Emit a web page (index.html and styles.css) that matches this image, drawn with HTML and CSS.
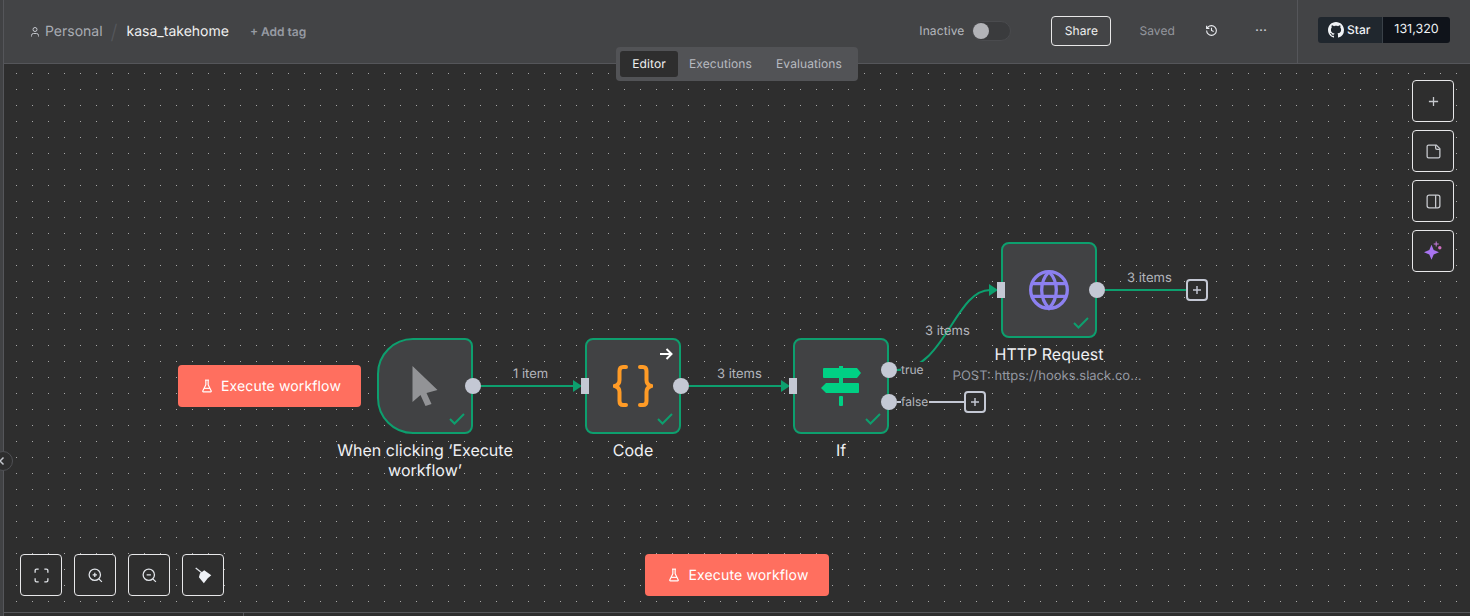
FILE: index.html
```html
<!DOCTYPE html>
<html>
<head>
    <title>kasa_takehome - n8n</title>
    <link rel="stylesheet" href="styles.css">
</head>
<body>
    <div class="sidebar"></div>
    <div class="main">
        <header class="topbar">
            <div class="crumbs">
                <svg class="crumb-icon" viewBox="0 0 24 24"><path d="M19 21v-2a4 4 0 0 0-4-4H9a4 4 0 0 0-4 4v2"/><circle cx="12" cy="7" r="4"/></svg>
                <span class="crumb-project">Personal</span>
                <span class="crumb-sep">/</span>
                <span class="crumb-name">kasa_takehome</span>
                <span class="add-tag">+ Add tag</span>
            </div>
            <div class="actions">
                <span class="status">Inactive</span>
                <span class="toggle"><span class="toggle-knob"></span></span>
                <button class="share">Share</button>
                <span class="saved">Saved</span>
                <svg class="history" viewBox="0 0 24 24"><path d="M3 12a9 9 0 1 0 9-9 9.75 9.75 0 0 0-6.74 2.74L3 8"/><path d="M3 3v5h5"/><path d="M12 7v5l4 2"/></svg>
                <span class="more">&#183;&#183;&#183;</span>
            </div>
            <div class="github">
                <div class="star-badge">
                    <span class="star-left">
                        <svg class="octocat" viewBox="0 0 16 16"><path d="M8 0C3.58 0 0 3.58 0 8c0 3.54 2.29 6.53 5.47 7.59.4.07.55-.17.55-.38 0-.19-.01-.82-.01-1.49-2.01.37-2.53-.49-2.69-.94-.09-.23-.48-.94-.82-1.13-.28-.15-.68-.52-.01-.53.63-.01 1.08.58 1.23.82.72 1.21 1.87.87 2.33.66.07-.52.28-.87.51-1.07-1.78-.2-3.64-.89-3.64-3.95 0-.87.31-1.59.82-2.15-.08-.2-.36-1.02.08-2.12 0 0 .67-.21 2.2.82.64-.18 1.32-.27 2-.27.68 0 1.36.09 2 .27 1.53-1.04 2.2-.82 2.2-.82.44 1.1.16 1.92.08 2.12.51.56.82 1.27.82 2.15 0 3.07-1.87 3.75-3.65 3.95.29.25.54.73.54 1.48 0 1.07-.01 1.93-.01 2.2 0 .21.15.46.55.38A8.013 8.013 0 0016 8c0-4.42-3.58-8-8-8z"/></svg>
                        Star
                    </span>
                    <span class="star-count">131,320</span>
                </div>
            </div>
        </header>

        <div class="tabs">
            <span class="tab tab-active">Editor</span>
            <span class="tab tab-executions">Executions</span>
            <span class="tab tab-evaluations">Evaluations</span>
        </div>

        <div class="canvas">
            <svg class="edges" width="1466" height="552" viewBox="4 64 1466 552">
                <path class="edge" d="M481 386H574"/>
                <path class="edge" d="M689 386H782"/>
                <path class="edge" d="M897 370C945 370 955 290 990 290"/>
                <path class="edge" d="M1105 290H1186"/>
                <path class="edge-empty" d="M897 402H964"/>
                <path class="arrow" d="M573 380l9 6-9 6z"/>
                <path class="arrow" d="M781 380l9 6-9 6z"/>
                <path class="arrow" d="M989 284l9 6-9 6z"/>
            </svg>

            <span class="edge-label label-a">1 item</span>
            <span class="edge-label label-b">3 items</span>
            <span class="edge-label label-c">3 items</span>
            <span class="edge-label label-d">3 items</span>
            <span class="edge-label label-true">true</span>
            <span class="edge-label label-false">false</span>

            <span class="plus plus-false"><svg viewBox="0 0 10 10"><path d="M5 0v10M0 5h10"/></svg></span>
            <span class="plus plus-http"><svg viewBox="0 0 10 10"><path d="M5 0v10M0 5h10"/></svg></span>

            <button class="run run-inline">
                <svg class="flask" viewBox="0 0 24 24"><path d="M10 2v7.527a2 2 0 0 1-.211.896L4.72 20.55a1 1 0 0 0 .9 1.45h12.76a1 1 0 0 0 .9-1.45l-5.069-10.127A2 2 0 0 1 14 9.527V2"/><path d="M8.5 2h7"/><path d="M7 16h10"/></svg>
                Execute workflow
            </button>

            <div class="node node-trigger">
                <svg class="node-icon" width="26" height="40" viewBox="1 1 25 40"><path class="cursor" d="M1 1L26 25L15 28L20 39L14 41L9 30L1 37Z"/></svg>
                <span class="handle-out"></span>
                <svg class="check" viewBox="0 0 16 12"><path d="M1 6l4.500 4.500L15 1"/></svg>
                <div class="node-label">When clicking ‘Execute workflow’</div>
            </div>

            <div class="node node-code">
                <svg class="node-icon braces" width="40" height="42" viewBox="0 0 40 42">
                    <path d="M13 2H10Q6.500 2 6.500 6V15Q6.500 19.500 2 21Q6.500 22.500 6.500 27V36Q6.500 40 10 40H13"/>
                    <path d="M27 2H30Q33.500 2 33.500 6V15Q33.500 19.500 38 21Q33.500 22.500 33.500 27V36Q33.500 40 30 40H27"/>
                </svg>
                <span class="handle-in"></span>
                <span class="handle-out"></span>
                <svg class="pin-arrow" viewBox="0 0 14 12"><path d="M1 6H12.500M7.500 1l5 5-5 5"/></svg>
                <svg class="check" viewBox="0 0 16 12"><path d="M1 6l4.500 4.500L15 1"/></svg>
                <div class="node-label">Code</div>
            </div>

            <div class="node node-if">
                <svg class="node-icon signs" width="40" height="40" viewBox="0 0 40 40">
                    <path d="M18 0h4v2h-4zM18 12h4v5h-4z"/>
                    <path d="M3 2H36L40 7L36 12H3Q2 12 2 11V3Q2 2 3 2Z"/>
                    <path d="M0 22L5 17H37Q38 17 38 18V26Q38 27 37 27H5Z"/>
                    <rect x="18" y="30" width="4" height="10" rx="1"/>
                </svg>
                <span class="handle-in"></span>
                <span class="handle-out handle-true"></span>
                <span class="handle-out handle-false"></span>
                <svg class="check" viewBox="0 0 16 12"><path d="M1 6l4.500 4.500L15 1"/></svg>
                <div class="node-label">If</div>
            </div>

            <div class="node node-http">
                <svg class="node-icon globe" width="44" height="44" viewBox="0 0 24 24"><circle cx="12" cy="12" r="10"/><path d="M12 2a14.500 14.500 0 0 0 0 20 14.500 14.500 0 0 0 0-20"/><path d="M3 8.500h18M3 15.500h18"/></svg>
                <span class="handle-in"></span>
                <span class="handle-out"></span>
                <svg class="check" viewBox="0 0 16 12"><path d="M1 6l4.500 4.500L15 1"/></svg>
                <div class="node-label">HTTP Request</div>
                <div class="node-sub">POST: https://hooks.slack.co...</div>
            </div>

            <div class="side-tools">
                <button class="tool"><svg viewBox="0 0 24 24"><path d="M12 5.500v13M5.500 12h13"/></svg></button>
                <button class="tool"><svg viewBox="0 0 24 24"><path d="M16 3H5a2 2 0 0 0-2 2v14a2 2 0 0 0 2 2h14a2 2 0 0 0 2-2V8Z"/><path d="M15 3v4a2 2 0 0 0 2 2h4"/></svg></button>
                <button class="tool"><svg viewBox="0 0 24 24"><rect x="3" y="3" width="18" height="18" rx="3"/><path d="M15 3v18"/></svg></button>
                <button class="tool"><svg class="sparkle" viewBox="0 0 20 20"><path class="spark-big" d="M8.500 3.800L10.700 9.100L16 11.300L10.700 13.500L8.500 18.800L6.300 13.500L1 11.300L6.300 9.100Z"/><path class="spark-plus" d="M13.200 .5v5M10.700 3h5"/><circle class="spark-dot" cx="16.800" cy="6.700" r="1.700"/></svg></button>
            </div>

            <div class="zoom-tools">
                <button class="tool tool-light"><svg viewBox="0 0 24 24"><path d="M8 3H5a2 2 0 0 0-2 2v3M21 8V5a2 2 0 0 0-2-2h-3M3 16v3a2 2 0 0 0 2 2h3M16 21h3a2 2 0 0 0 2-2v-3"/></svg></button>
                <button class="tool tool-light"><svg viewBox="0 0 24 24"><circle cx="11" cy="11" r="8"/><path d="M21 21l-4.300-4.300M11 8v6M8 11h6"/></svg></button>
                <button class="tool tool-light"><svg viewBox="0 0 24 24"><circle cx="11" cy="11" r="8"/><path d="M21 21l-4.300-4.300M8 11h6"/></svg></button>
                <button class="tool tool-light"><svg viewBox="0 0 24 24"><path d="M1 1.500L9.500 8"/><path class="brush" d="M13 4.500L23 11.500L18 16L12.500 23L5.500 14.500L7 9Z"/></svg></button>
            </div>

            <button class="run run-bottom">
                <svg class="flask" viewBox="0 0 24 24"><path d="M10 2v7.527a2 2 0 0 1-.211.896L4.72 20.55a1 1 0 0 0 .9 1.45h12.76a1 1 0 0 0 .9-1.45l-5.069-10.127A2 2 0 0 1 14 9.527V2"/><path d="M8.500 2h7"/><path d="M7 16h10"/></svg>
                Execute workflow
            </button>
        </div>
        <div class="log-strip"></div>
        <span class="collapse"><svg viewBox="0 0 8 10"><path d="M5.500 1.500L2 5l3.500 3.500"/></svg></span>
    </div>
</body>
</html>
```
FILE: styles.css
```css
* {
    box-sizing: border-box;
}
html, body {
    margin: 0;
    height: 100%;
    overflow: hidden;
}
body {
    display: flex;
    font-family: Inter, "Liberation Sans", sans-serif;
    text-rendering: geometricPrecision;
    background-color: #2e2e2e;
    color: #f0f0f0;
}
button {
    font-family: inherit;
    text-rendering: inherit;
    cursor: pointer;
}
svg {
    display: block;
}

.sidebar {
    width: 4px;
    flex: none;
    background-color: #414244;
    border-right: 1px solid #55565a;
}
.main {
    flex: 1;
    display: flex;
    flex-direction: column;
    position: relative;
    min-width: 0;
}

/* top bar */
.topbar {
    height: 64px;
    flex: none;
    display: flex;
    align-items: center;
    background-color: #434446;
    border-bottom: 1px solid #55565a;
}
.crumbs {
    display: flex;
    align-items: center;
    padding-left: 25px;
}
.crumb-icon {
    width: 12px;
    height: 12px;
    margin-right: 4px;
    fill: none;
    stroke: #c4c7cd;
    stroke-width: 2;
}
.crumb-project {
    font-size: 14px;
    color: #a9acb3;
}
.crumb-sep {
    margin: 0 9px 0 8px;
    font-size: 20px;
    font-weight: 300;
    color: #55575c;
}
.crumb-name {
    font-size: 14px;
    color: #f0f0f0;
}
.add-tag {
    margin-left: 21px;
    font-size: 12px;
    font-weight: 600;
    color: #969aa2;
}
.actions {
    display: flex;
    align-items: center;
    margin-left: auto;
    height: 100%;
    padding-bottom: 2px;
}
.status {
    font-size: 12px;
    letter-spacing: 0.1px;
    color: #b4b7bd;
    margin-right: 8px;
}
.toggle {
    width: 39px;
    height: 20px;
    padding: 2px 0;
    border-radius: 10px;
    background-color: #3a3b3d;
    border: 1px solid #4a4b4e;
}
.toggle-knob {
    display: block;
    width: 16px;
    height: 16px;
    margin-top: -1px;
    border-radius: 50%;
    background-color: #b2b3b7;
}
.share {
    width: 60px;
    height: 30px;
    margin-left: 40px;
    background: transparent;
    border: 1px solid #e8e8e8;
    border-radius: 4px;
    font-size: 12px;
    letter-spacing: 0.1px;
    color: #f0f0f0;
}
.saved {
    margin-left: 28px;
    font-size: 12px;
    letter-spacing: 0.1px;
    color: #93969d;
}
.history {
    width: 13px;
    height: 13px;
    margin-left: 30px;
    fill: none;
    stroke: #eceef2;
    stroke-width: 2;
}
.more {
    width: 12px;
    margin-left: 37px;
    font-size: 14px;
    line-height: 1;
    color: #c4c7cd;
}
.github {
    width: 173px;
    height: 100%;
    margin-left: 30px;
    flex: none;
    display: flex;
    align-items: center;
    padding-left: 20px;
    padding-bottom: 4px;
    border-left: 1px solid #55565a;
}
.star-badge {
    display: flex;
    height: 26px;
    border-radius: 3px;
    overflow: hidden;
    font-size: 12px;
    font-weight: 500;
    color: #f0f3f6;
}
.star-left {
    width: 65px;
    display: flex;
    align-items: center;
    gap: 3px;
    padding-left: 10px;
    background-color: #20272e;
    border-right: 1px solid #3a4148;
}
.octocat {
    width: 16px;
    height: 16px;
    fill: #f0f3f6;
}
.star-count {
    width: 67px;
    display: flex;
    align-items: center;
    justify-content: center;
    background-color: #0f131a;
    font-size: 12.500px;
    font-weight: 400;
}

/* editor tabs */
.tabs {
    position: absolute;
    left: 612px;
    top: 47px;
    width: 242px;
    height: 34px;
    padding: 4px;
    display: flex;
    z-index: 2;
    background-color: #525356;
    border-radius: 4px;
}
.tab {
    flex: none;
    display: flex;
    align-items: center;
    justify-content: center;
    padding-bottom: 2px;
    font-size: 12px;
    letter-spacing: 0.1px;
    color: #b8bbc1;
}
.tab-active {
    width: 58px;
    background-color: #2e2e2e;
    border-radius: 3px;
    color: #f0f0f0;
}
.tab-executions {
    width: 85px;
}
.tab-evaluations {
    width: 92px;
}

/* canvas */
.canvas {
    flex: 1;
    position: relative;
    overflow: hidden;
    border-bottom: 1px solid #55565a;
    background-color: #2e2e2e;
    background-image: radial-gradient(circle at 0.5px 0.5px, #a8a8a8 0.6px, transparent 0.8px);
    background-size: 16px 16px;
    background-position: 12px 9px;
}
.log-strip {
    height: 3px;
    flex: none;
    margin-left: 239px;
    border-left: 1px solid #55565a;
}
.edges {
    position: absolute;
    left: 0;
    top: 0;
}
.edge {
    fill: none;
    stroke: #0d9f6e;
    stroke-width: 2;
}
.edge-empty {
    fill: none;
    stroke: #c4c8d4;
    stroke-width: 2;
}
.arrow {
    fill: #0d9f6e;
}
.edge-label {
    position: absolute;
    font-size: 13px;
    line-height: 16px;
    color: #b3b6bd;
    background-color: #2e2e2e;
    white-space: nowrap;
}
.label-a { left: 509px; top: 302px; background: none; }
.label-b { left: 713px; top: 302px; background: none; }
.label-c { left: 921px; top: 259px; background: none; }
.label-d { left: 1123px; top: 206px; background: none; }
.label-true { left: 897px; top: 298px; font-size: 12px; }
.label-false { left: 897px; top: 330px; font-size: 12px; padding-right: 1px; }

.plus {
    position: absolute;
    width: 22px;
    height: 22px;
    display: flex;
    align-items: center;
    justify-content: center;
    background-color: #2e2e2e;
    border: 2px solid #c4c8d4;
    border-radius: 4px;
}
.plus svg {
    width: 8px;
    height: 8px;
    fill: none;
    stroke: #c4c8d4;
    stroke-width: 1.800;
}
.plus-false { left: 960px; top: 327px; }
.plus-http { left: 1182px; top: 215px; }

.run {
    position: absolute;
    height: 42px;
    padding: 0 0 0 2px;
    display: flex;
    align-items: center;
    justify-content: center;
    gap: 7px;
    border: none;
    border-radius: 4px;
    background-color: #ff6f5f;
    color: #fff;
    font-size: 14px;
    letter-spacing: 0.15px;
}
.run-inline {
    left: 174px;
    top: 301px;
    width: 183px;
}
.run-bottom {
    left: 641px;
    top: 490px;
    width: 184px;
}
.flask {
    width: 14px;
    height: 14px;
    fill: none;
    stroke: #fff;
    stroke-width: 2;
}

/* nodes */
.node {
    position: absolute;
    width: 96px;
    height: 96px;
    top: 274px;
    display: flex;
    align-items: center;
    justify-content: center;
    background-color: #414244;
    border: 2px solid #0d9f6e;
    border-radius: 8px;
}
.node-trigger {
    left: 373px;
    border-radius: 36px 8px 8px 36px;
}
.node-code { left: 581px; }
.node-if { left: 789px; }
.node-http { left: 997px; top: 178px; }
.cursor {
    fill: #929396;
}
.braces path {
    fill: none;
    stroke: #ff9b26;
    stroke-width: 4;
    stroke-linecap: round;
}
.signs {
    fill: #00d084;
}
.globe {
    fill: none;
    stroke: #8c80f0;
    stroke-width: 1.800;
}
.handle-out {
    position: absolute;
    right: -10px;
    top: 38px;
    width: 16px;
    height: 16px;
    border-radius: 50%;
    background-color: #c4c8d4;
}
.handle-true { top: 22px; }
.handle-false { top: 54px; }
.handle-in {
    position: absolute;
    left: -6px;
    top: 38px;
    width: 8px;
    height: 16px;
    background-color: #c4c8d4;
}
.check {
    position: absolute;
    right: 6px;
    bottom: 7px;
    width: 16px;
    height: 12px;
    fill: none;
    stroke: #0d9f6e;
    stroke-width: 2;
}
.pin-arrow {
    position: absolute;
    right: 6px;
    top: 8px;
    width: 14px;
    height: 12px;
    fill: none;
    stroke: #fff;
    stroke-width: 2;
}
.node-label {
    position: absolute;
    left: -54px;
    top: 100px;
    width: 200px;
    padding: 0 10px;
    text-align: center;
    font-size: 16px;
    line-height: 20px;
    color: #f0f1f4;
}
.node-sub {
    position: absolute;
    left: -56px;
    top: 124px;
    width: 200px;
    text-align: center;
    font-size: 13px;
    line-height: 16px;
    color: #9396a0;
    white-space: nowrap;
}

/* floating tools */
.tool {
    width: 42px;
    height: 42px;
    padding: 0;
    display: flex;
    align-items: center;
    justify-content: center;
    background: #2e2e2e;
    border: 1px solid #e8e8ea;
    border-radius: 4px;
}
.tool svg {
    width: 17px;
    height: 17px;
    fill: none;
    stroke: #c8cacf;
    stroke-width: 1.800;
}
.tool-light svg {
    stroke: #e2e5ea;
}
.side-tools {
    position: absolute;
    left: 1408px;
    top: 16px;
    display: flex;
    flex-direction: column;
    gap: 8px;
}
.zoom-tools {
    position: absolute;
    left: 16px;
    top: 490px;
    display: flex;
    gap: 12px;
}
.tool .sparkle {
    width: 20px;
    height: 20px;
    stroke: none;
}
.spark-big { fill: #a874f0; stroke: none; }
.spark-plus { stroke: #c77ce0; stroke-width: 1; fill: none; }
.spark-dot { fill: #d06ec0; stroke: none; }
.tool .brush {
    fill: #eef1f6;
    stroke: none;
}
.collapse {
    position: absolute;
    left: -11px;
    top: 451px;
    width: 20px;
    height: 20px;
    display: flex;
    align-items: center;
    justify-content: flex-end;
    padding-right: 6px;
    border-radius: 50%;
    background-color: #2e2e2e;
    border: 1px solid #4f5054;
}
.collapse svg {
    width: 8px;
    height: 10px;
    fill: none;
    stroke: #c4c7cd;
    stroke-width: 1.500;
}
```
